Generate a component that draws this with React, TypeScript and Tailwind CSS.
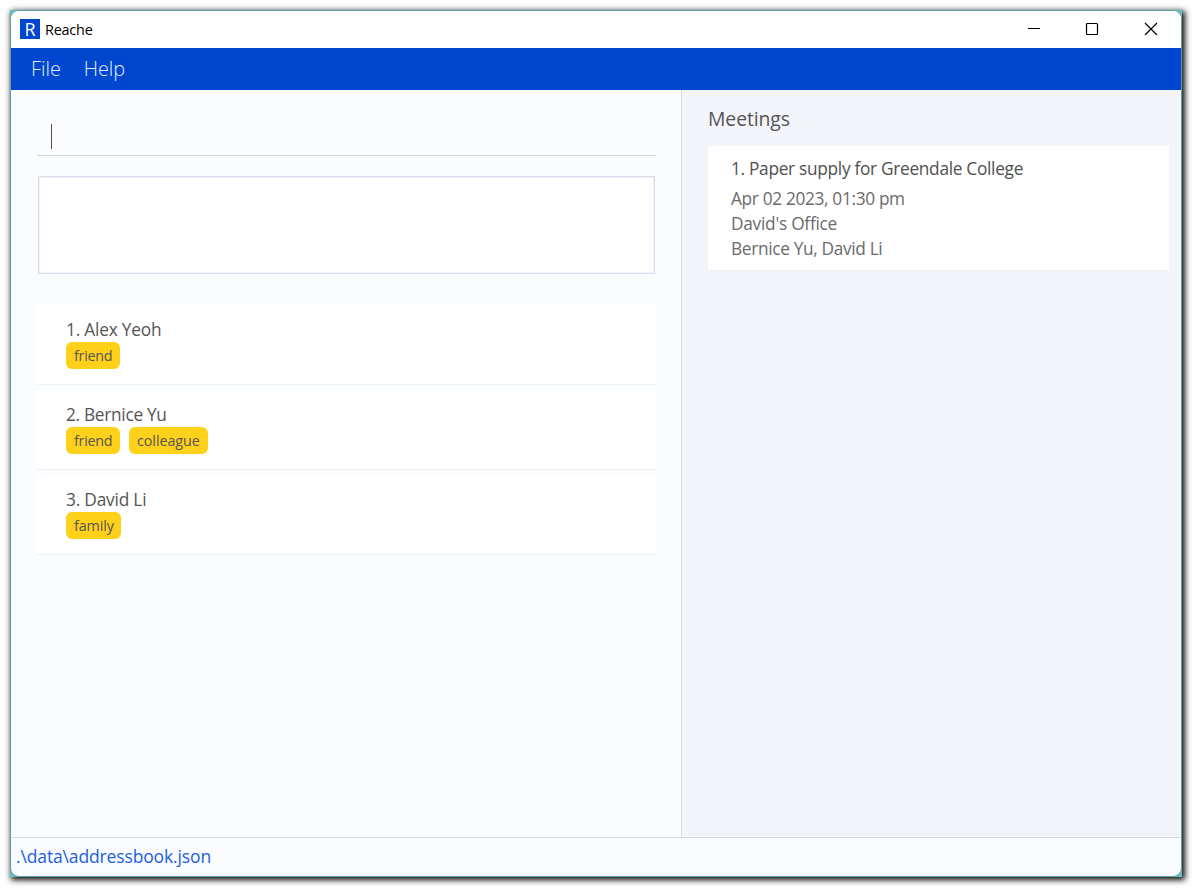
type TagInfo = { label: string; tracking: string };

const friend: TagInfo = { label: "friend", tracking: "w-[54px] tracking-[-0.25px]" };
const colleague: TagInfo = { label: "colleague", tracking: "w-[79px] tracking-[-0.05px]" };
const family: TagInfo = { label: "family", tracking: "w-[55px] tracking-[-0.1px]" };

const people = [
  { name: "1. Alex Yeoh", tracking: "tracking-[-0.2px]", tags: [friend] },
  { name: "2. Bernice Yu", tracking: "tracking-[-0.3px]", tags: [friend, colleague] },
  { name: "3. David Li", tracking: "tracking-[-0.2px]", tags: [family] },
];

function Tag({ tag }: { tag: TagInfo }) {
  return (
    <span
      className={`h-[27px] whitespace-nowrap rounded-[6px] bg-[#ffd11a] pl-2 text-[14.3px] leading-[27px] text-[#555] ${tag.tracking}`}
    >
      {tag.label}
    </span>
  );
}

function TitleBar() {
  return (
    <header className="flex h-[37px] shrink-0 items-center bg-white pl-[9px]">
      <div className="mb-px flex size-5 items-center justify-center bg-[#0047cf] pb-px text-[18px] font-medium leading-5 text-white">
        R
      </div>
      <span className="ml-[5px] text-[14.4px] tracking-[-0.2px] text-black">Reache</span>
      <svg className="mb-px ml-auto mr-[22px]" width="132" height="14" viewBox="0 0 132 14" fill="none" stroke="#000">
        <path d="M1 6.5h12" />
        <rect x="59.5" y="1.5" width="11" height="11" rx="1" strokeWidth="1.2" />
        <path d="M118 1l12 12M130 1l-12 12" strokeWidth="1.2" />
      </svg>
    </header>
  );
}

export default function App() {
  return (
    <div className="h-[895px] w-[1200px] overflow-hidden bg-white pl-[10px] pt-[10px] font-['Open_Sans','Noto_Sans',sans-serif]">
      <div className="h-[867px] w-[1172px] bg-[#68bfc3] shadow-[2px_2px_6px_1px_rgba(0,0,0,0.95)]">
        <div className="flex h-full w-full flex-col overflow-hidden rounded-[9px] border border-[#5da0a3] bg-[#fbfcff]">
          <TitleBar />
          <nav className="flex h-[42px] shrink-0 gap-[23px] bg-[#0047cf] pl-5 text-[19.8px] font-light leading-[42px] text-[#e6edfb]">
            <span>File</span>
            <span>Help</span>
          </nav>
          <main className="flex h-[747px] shrink-0">
            <section className="w-[670px] pl-[26px] pr-[25px]">
              <div className="mt-[20px] flex h-[46px] items-center border-b border-[#d0d6e4] pl-[14px] pt-[7px]">
                <span className="h-[25px] w-px bg-[#505050]" />
              </div>
              <div className="ml-px mt-5 h-[98px] w-[617px] border border-[#dadeeb] bg-white shadow-[inset_0_0_0_1px_#f1f2f9]" />
              <div className="mt-[31px] flex flex-col gap-[5px]">
                {people.map((person) => (
                  <article key={person.name} className="h-20 border-b border-[#e9f1f5] bg-white pl-[29px] pt-[13px]">
                    <h2 className={`text-[17.3px] leading-6 text-[#555] ${person.tracking}`}>{person.name}</h2>
                    <div className="flex gap-[9px]">
                      {person.tags.map((tag) => (
                        <Tag key={tag.label} tag={tag} />
                      ))}
                    </div>
                  </article>
                ))}
              </div>
            </section>
            <aside className="w-[500px] border-l border-[#d8dbe4] bg-[#f4f5fa] pl-[26px] pr-3">
              <h1 className="mt-[16px] text-[19.4px] leading-[26px] tracking-[-0.1px] text-[#555]">Meetings</h1>
              <article className="mt-[14px] h-[125px] border-b border-[#eef0f5] bg-white pl-[23px] pt-[11px] text-[17.3px]">
                <h2 className="leading-6 tracking-[-0.3px] text-[#505050]">1. Paper supply for Greendale College</h2>
                <div className="mt-[5px] leading-[25px] tracking-[-0.34px] text-[#6b6b6b]">
                  <p>Apr 02 2023, 01:30 pm</p>
                  <p className="tracking-[-0.26px]">David's Office</p>
                  <p>Bernice Yu, David Li</p>
                </div>
              </article>
            </aside>
          </main>
          <footer className="h-10 shrink-0 border-t border-[#d6d9e4] pl-[5px] text-[17.5px] leading-[37px] tracking-[-0.14px] text-[#2060dc]">
            .\data\addressbook.json
          </footer>
        </div>
      </div>
    </div>
  );
}
